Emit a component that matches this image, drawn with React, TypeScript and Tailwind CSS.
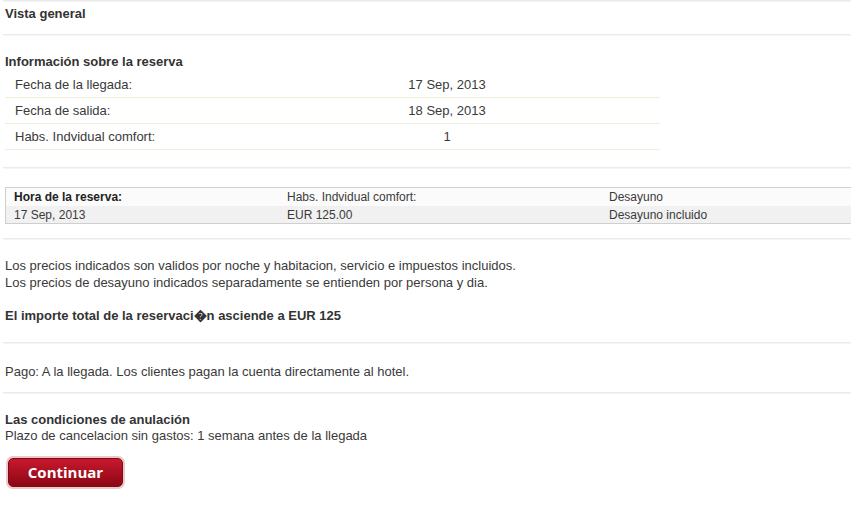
import React from "react";

const Hr = ({ className = "" }: { className?: string }) => (
  <div className={"ml-[3px] h-[2px] bg-[#ebebeb] border-b border-[#f5f5f5] " + className} />
);

export default function App() {
  const infoRows: [string, string][] = [
    ["Fecha de la llegada:", "17 Sep, 2013"],
    ["Fecha de salida:", "18 Sep, 2013"],
    ["Habs. Indvidual comfort:", "1"],
  ];
  return (
    <div className="w-[851px] h-[514px] overflow-hidden bg-white text-[#3a3a3a] font-['Liberation_Sans',Arial,sans-serif]">
      <Hr />
      <div className="h-[32px] pt-[4px] pl-[5px] text-[13px] leading-[16px] font-bold text-[#333]">Vista general</div>
      <Hr />
      <div className="mt-[18px] pl-[5px] text-[13px] leading-[16px] font-bold text-[#333]">
        Información sobre la reserva
      </div>
      <div className="mt-[2px] ml-[5px] w-[655px] text-[13px]">
        {infoRows.map(([l, v]) => (
          <div key={l} className="flex h-[26px] items-center border-b border-[#efefdc]">
            <div className="w-[229px] pl-[10px]">{l}</div>
            <div className="flex-1 text-center">{v}</div>
          </div>
        ))}
      </div>
      <Hr className="mt-[17px]" />
      <div className="mt-[18px] ml-[5px] w-[860px] border border-[#cfcfcf] text-[12px]">
        <div className="grid grid-cols-[273px_322px_1fr] h-[18px] items-center bg-[#fbfbfb]">
          <div className="pl-[8px] font-bold text-[#222]">Hora de la reserva:</div>
          <div className="pl-[8px]">Habs. Indvidual comfort:</div>
          <div className="pl-[8px]">Desayuno</div>
        </div>
        <div className="grid grid-cols-[273px_322px_1fr] h-[17px] items-center bg-[#f1f1f1]">
          <div className="pl-[8px]">17 Sep, 2013</div>
          <div className="pl-[8px]">EUR 125.00</div>
          <div className="pl-[8px]">Desayuno incluido</div>
        </div>
      </div>
      <Hr className="mt-[14px]" />
      <div className="mt-[17px] pl-[5px] text-[13px] leading-[17px]">
        <div>Los precios indicados son validos por noche y habitacion, servicio e impuestos incluidos.</div>
        <div>Los precios de desayuno indicados separadamente se entienden por persona y dia.</div>
      </div>
      <div className="mt-[17px] pl-[5px] text-[13px] leading-[16px] font-bold text-[#333]">
        El importe total de la reservaci�n asciende a EUR 125
      </div>
      <Hr className="mt-[18px]" />
      <div className="mt-[19px] pl-[5px] text-[13px] leading-[17px]">
        Pago: A la llegada. Los clientes pagan la cuenta directamente al hotel.
      </div>
      <Hr className="mt-[12px]" />
      <div className="mt-[18px] pl-[5px] text-[13px] leading-[16px] font-bold text-[#333]">
        Las condiciones de anulación
      </div>
      <div className="pl-[5px] text-[13px] leading-[16px]">
        Plazo de cancelacion sin gastos: 1 semana antes de la llegada
      </div>
      <div className="mt-[14px] ml-[8px]">
        <button className="flex h-[29px] w-[115px] items-center justify-center rounded-[5px] border border-[#7d0a16] bg-gradient-to-b from-[#c9182e] to-[#8c0714] text-[15px] font-bold text-white shadow-[0_0_0_2px_#ecc8c8] font-['Open_Sans',sans-serif] leading-none">
          Continuar
        </button>
      </div>
    </div>
  );
}
